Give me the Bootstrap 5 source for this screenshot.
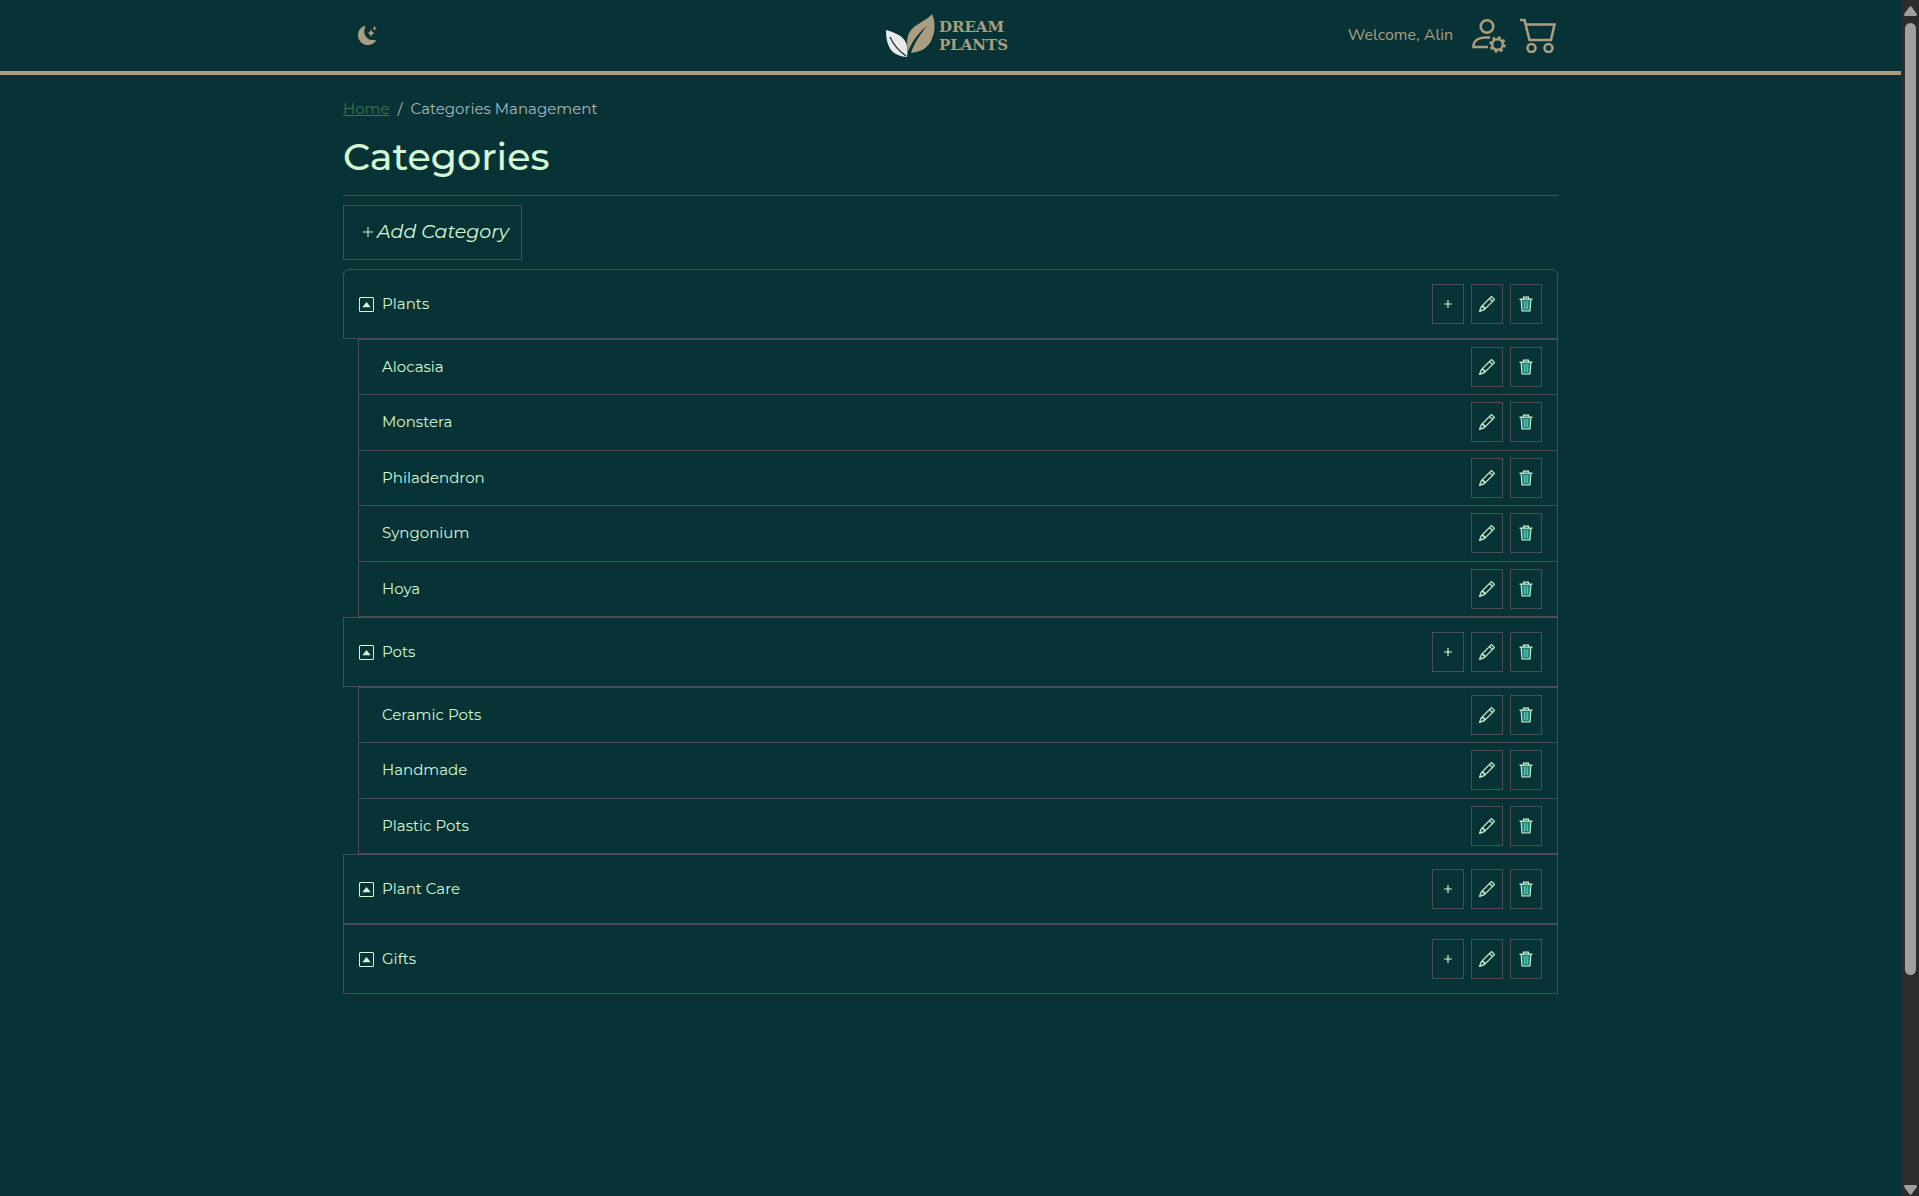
<!DOCTYPE html>
<html lang="en">
<head>
<meta charset="utf-8">
<meta name="viewport" content="width=device-width, initial-scale=1">
<title>Categories Management - Dream Plants</title>
<link href="https://cdn.jsdelivr.net/npm/bootstrap@5.3.0/dist/css/bootstrap.min.css" rel="stylesheet">
<style>
:root { --deep: #073336; --tan: #aa9d80; --mint: #d3f8d3; --line: #4b4d56; }
body { background: var(--deep); color: var(--mint); font-family: Montserrat, Inter, sans-serif; font-size: 15px; line-height: 24px; }
.page-wrap { max-width: 1215px; width: 100%; margin: 0 auto; }
.site-head { border-bottom: 4px solid var(--tan); color: var(--tan); }
.head-bar { height: 71px; display: grid; grid-template-columns: 1fr auto 1fr; align-items: center; }
.icon-btn { background: none; border: 0; padding: 0; color: inherit; line-height: 0; }
.theme-btn { margin: 0 0 4px 15px; }
.brand-link { color: inherit; text-decoration: none; gap: 4px; padding-right: 8px; }
.brand-text { font: bold 15px/18px "DejaVu Serif", serif; }
.welcome { font-family: Nunito, Inter, sans-serif; font-size: 16px; font-weight: 400; margin: 0 19px 2px 0; }
.head-tools { padding-right: 2px; }
.user-btn { margin-right: 14px; }
.crumbs { --bs-breadcrumb-divider-color: #a9b6bb; --bs-breadcrumb-item-active-color: #a9b6bb; font-size: 15px; margin: 22px 0 12px; }
.crumbs a { color: #42704c; }
.page-title { font-size: 38px; line-height: 48px; font-weight: 500; margin: 0; padding-bottom: 14px; border-bottom: 1px solid var(--line); }
.box-btn { background: none; border: 1px solid var(--line); border-radius: 0; color: var(--mint); padding: 0; }
.box-btn:hover { background: #0d4447; color: var(--mint); border-color: var(--line); }
.add-btn { height: 55px; padding: 0 12px 0 18px; margin: 9px 0; font-size: 19px; font-style: italic; }
.add-btn svg { margin-right: 3px; }
.act-btn { width: 32px; height: 40px; line-height: 0; }
.acts { gap: 7px; }
.cat-tree { margin: 0; padding: 0; list-style: none; }
.cat-head { border: 1px solid var(--line); padding: 14px 15px; }
.cat-tree > li:first-child .cat-head { border-radius: 6px 6px 0 0; }
.cat-head, .sub-row { display: flex; align-items: center; justify-content: space-between; }
.cat-label { gap: 8px; }
.sub-list { list-style: none; margin: 0 0 0 15px; padding: 0; border: 1px solid var(--line); }
.sub-row { padding: 7px 15px 7px 23px; }
.sub-row:nth-child(even) { padding-bottom: 8px; }
.sub-row + .sub-row { border-top: 1px solid var(--line); }
.scroll-rail { width: 18px; background: #2c2c2c; position: sticky; top: 0; color: #a0a0a0; padding: 6px 0 1px; line-height: 0; }
.scroll-thumb { width: 11px; border-radius: 6px; background: #a0a0a0; flex: 0 0 calc(80vh - 5px); margin-top: 7px; }
</style>
<script src="https://cdn.jsdelivr.net/npm/bootstrap@5.3.0/dist/js/bootstrap.bundle.min.js" defer></script>
</head>
<body>
<svg class="d-none">
  <symbol id="i-plus" viewBox="0 0 16 16"><path d="M8 4v8M4 8h8" stroke="currentColor" stroke-width="1.2" fill="none"/></symbol>
  <symbol id="i-pencil" viewBox="0 0 16 16"><path d="M12.146.146a.5.5 0 0 1 .708 0l3 3a.5.5 0 0 1 0 .708l-10 10a.5.5 0 0 1-.168.11l-5 2a.5.5 0 0 1-.65-.65l2-5a.5.5 0 0 1 .11-.168zM11.207 2.5 13.5 4.793 14.793 3.5 12.5 1.207zm1.586 3L10.500 3.207 4 9.707V10h.5a.5.5 0 0 1 .5.5v.5h.5a.5.5 0 0 1 .5.5v.5h.293zm-9.761 5.175-.106.106-1.528 3.821 3.821-1.528.106-.106A.5.5 0 0 1 5 12.500V12h-.5a.5.5 0 0 1-.5-.5V11h-.5a.5.5 0 0 1-.468-.325" fill="currentColor" stroke="currentColor" stroke-width=".3"/></symbol>
  <symbol id="i-trash" viewBox="0 0 16 16"><path d="M3.200 3.500 4 15h8l.8-11.500z" fill="#12807c"/><path d="M1.500 3.100h13M5.500 3V1.100h5V3M3.100 3.500 4 15h8l.9-11.500" fill="none" stroke="currentColor" stroke-width="1.100"/><path d="M6.200 5l.3 8M8 5v8M9.800 5l-.3 8" fill="none" stroke="#8fdcb4" stroke-width=".7"/></symbol>
  <symbol id="i-caret" viewBox="0 0 16 16"><rect x=".5" y=".5" width="15" height="15" rx="1.500" fill="none" stroke="currentColor" stroke-width="1.100"/><path d="M3.500 10.800 8 5.300l4.500 5.500z" fill="currentColor"/></symbol>
</svg>
<div class="d-flex min-vh-100">
<div class="flex-grow-1">
  <header class="site-head">
    <div class="page-wrap head-bar">
      <div>
        <button class="icon-btn theme-btn" type="button" aria-label="Toggle theme">
          <svg width="19" height="19" viewBox="0 0 16 16" fill="currentColor"><path d="M6 .278a.77.77 0 0 1 .08.858 7.200 7.200 0 0 0-.878 3.460c0 4.021 3.278 7.277 7.318 7.277q.792-.001 1.533-.16a.79.79 0 0 1 .81.316.73.73 0 0 1-.031.893A8.350 8.350 0 0 1 8.344 16C3.734 16 0 12.286 0 7.710 0 4.266 2.114 1.312 5.124.060A.75.75 0 0 1 6 .278"/><path d="M10.794 3.148a.217.217 0 0 1 .412 0l.387 1.162c.173.518.579.924 1.097 1.097l1.162.387a.217.217 0 0 1 0 .412l-1.162.387a1.730 1.730 0 0 0-1.097 1.097l-.387 1.162a.217.217 0 0 1-.412 0l-.387-1.162A1.730 1.730 0 0 0 9.310 6.593l-1.162-.387a.217.217 0 0 1 0-.412l1.162-.387a1.730 1.730 0 0 0 1.097-1.097zM13.863.099a.145.145 0 0 1 .274 0l.258.774c.115.346.386.617.732.732l.774.258a.145.145 0 0 1 0 .274l-.774.258a1.160 1.160 0 0 0-.732.732l-.258.774a.145.145 0 0 1-.274 0l-.258-.774a1.160 1.160 0 0 0-.732-.732l-.774-.258a.145.145 0 0 1 0-.274l.774-.258c.346-.115.617-.386.732-.732z"/></svg>
        </button>
      </div>
      <a class="brand-link d-flex align-items-center" href="#">
        <svg width="50" height="44" viewBox="0 0 50 44"><path d="M1 16C15 20 25 25 22 43 10 42 1 37 1 16z" fill="#e9e9ea"/><path d="M5 23c4 9 9 14 16 19" stroke="#073336" stroke-width="1.200" fill="none"/><path d="M23 38C20 20 25 15 35 9 41 5 45 3 47 0 51 9 50 19 46 27 42 35 35 38 26 39 28 31 36 19 42 12 33 19 26 29 23 38z" fill="#aa9d80"/></svg>
        <span class="brand-text">DREAM<br>PLANTS</span>
      </a>
      <div class="head-tools d-flex align-items-center justify-content-end">
        <span class="welcome">Welcome, Alin</span>
        <button class="icon-btn user-btn" type="button" aria-label="Account settings">
          <svg width="34" height="35" viewBox="0 0 34 35" fill="none" stroke="currentColor" stroke-width="2.600"><circle cx="15" cy="8.500" r="6.300"/><path d="M18 19.500H13C6 19.500 2 23 1.500 27.500V29h14.500"/><circle cx="25.500" cy="26.500" r="5.300"/><circle cx="25.500" cy="26.500" r="7" stroke-dasharray="2.900 2.598"/></svg>
        </button>
        <button class="icon-btn" type="button" aria-label="Cart">
          <svg width="36" height="35" viewBox="0 0 36 35" fill="none" stroke="currentColor" stroke-width="2.600"><path d="M0 2h4.500l5 20h21.500l3.500-15.500H6"/><circle cx="11.500" cy="30" r="4"/><circle cx="28.500" cy="30" r="4"/></svg>
        </button>
      </div>
    </div>
  </header>
  <main class="page-wrap">
    <nav aria-label="breadcrumb">
      <ol class="breadcrumb crumbs">
        <li class="breadcrumb-item"><a href="#">Home</a></li>
        <li class="breadcrumb-item active" aria-current="page">Categories Management</li>
      </ol>
    </nav>
    <h1 class="page-title">Categories</h1>
    <button class="btn box-btn add-btn" type="button"><svg width="12" height="12" viewBox="0 0 12 12" class="align-baseline"><path d="M6 1v10M1 6h10" stroke="currentColor"/></svg>Add Category</button>
    <ul class="cat-tree" id="tree"></ul>
  </main>
</div>
<aside class="scroll-rail vh-100 d-flex flex-column align-items-center" aria-hidden="true">
  <svg width="13" height="10" viewBox="0 0 13 10" fill="currentColor"><path d="M5.500.8q1-1 2 0L12.800 8q.5 2-1 2H1.200q-1.500 0-1-2z"/></svg>
  <div class="scroll-thumb"></div>
  <svg class="mt-auto" width="13" height="10" viewBox="0 0 13 10" fill="currentColor"><path d="M5.500 9.200q1 1 2 0L12.800 2q.5-2-1-2H1.200Q-.3 0 .2 2z"/></svg>
</aside>
</div>
<script>
const cats = [
  ["Plants", ["Alocasia", "Monstera", "Philadendron", "Syngonium", "Hoya"]],
  ["Pots", ["Ceramic Pots", "Handmade", "Plastic Pots"]],
  ["Plant Care", []],
  ["Gifts", []]
];
const icon = (n, s) => `<svg width="${s}" height="${s}"><use href="#i-${n}"/></svg>`;
const act = (n, label) => `<button class="btn box-btn act-btn" type="button" aria-label="${label}">${icon(n, 16)}</button>`;
const edit = name => act("pencil", "Edit " + name) + act("trash", "Delete " + name);
document.getElementById("tree").innerHTML = cats.map(([name, subs]) => `
  <li>
    <div class="cat-head">
      <div class="cat-label d-flex align-items-center"><button class="icon-btn" type="button" aria-label="Toggle ${name}">${icon("caret", 15)}</button><span>${name}</span></div>
      <div class="acts d-flex">${act("plus", "Add to " + name)}${edit(name)}</div>
    </div>
    ${subs.length ? `<ul class="sub-list">${subs.map(s => `<li class="sub-row"><span>${s}</span><div class="acts d-flex">${edit(s)}</div></li>`).join("")}</ul>` : ""}
  </li>`).join("");
</script>
</body>
</html>
